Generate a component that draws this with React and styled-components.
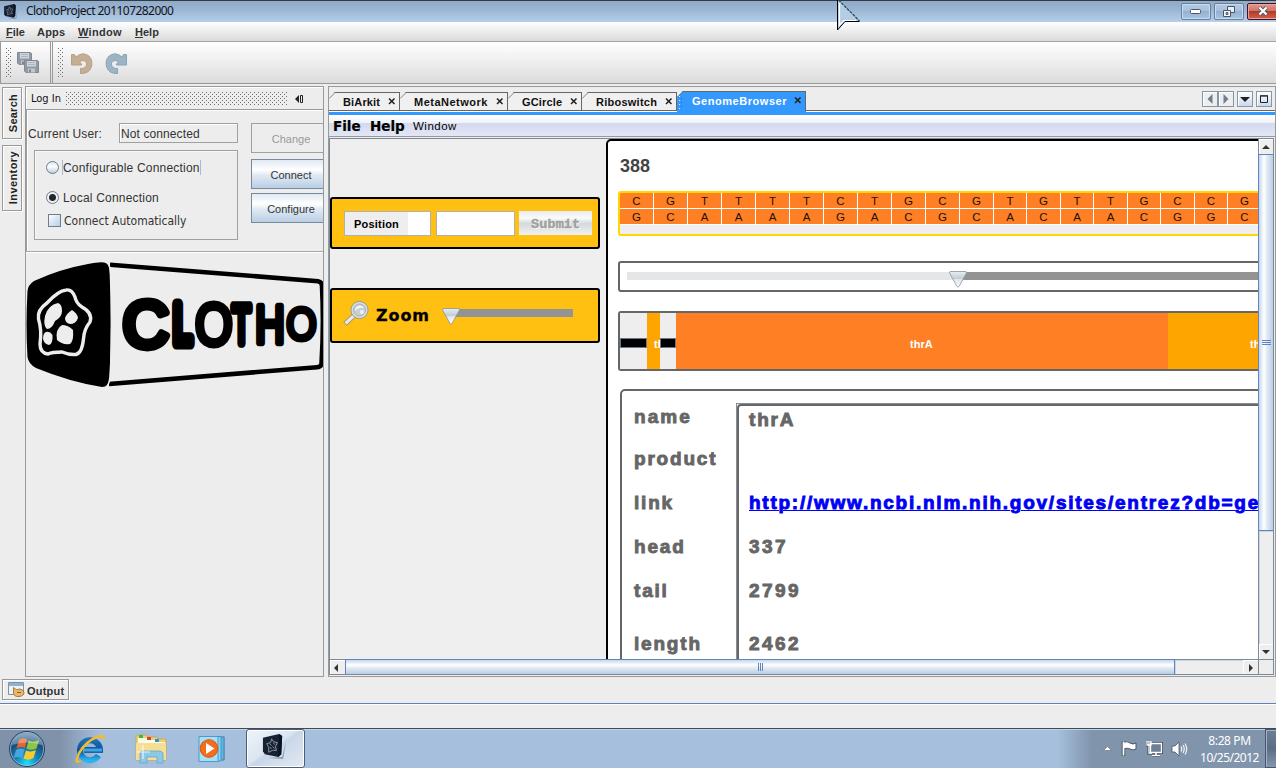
import React from 'react';
import styled, { createGlobalStyle, css } from 'styled-components';

const Global = createGlobalStyle`
  *, *::before, *::after { box-sizing: border-box; }
  body { margin: 0; background: #ededed; overflow: hidden; }
  svg { display: block; flex: none; }
`;

const ARIAL = '"Liberation Sans", Arial, sans-serif';
const TAHOMA = '"DejaVu Sans Condensed", "DejaVu Sans", sans-serif';
const SEGOE = '"Noto Sans", "Open Sans", sans-serif';

const Text = styled.span`
  display: block;
  flex: none;
  font-family: ${(p) => p.$font || ARIAL};
  font-size: ${(p) => p.$size || 11}px;
  font-weight: ${(p) => (p.$bold ? 700 : 400)};
  letter-spacing: ${(p) => p.$track || 0}px;
  color: ${(p) => p.$color || '#333'};
  line-height: 14px;
  white-space: pre;
`;

const Screen = styled.div`
  position: relative;
  width: 1276px;
  height: 768px;
  overflow: hidden;
  display: flex;
  flex-direction: column;
  background: #ededed;
`;

/* ---------- window frame ---------- */
const TitleBar = styled.header`
  height: 22px;
  flex: none;
  display: flex;
  align-items: center;
  padding-left: 3px;
  border-top: 1px solid #35383d;
  background: linear-gradient(#8fabca, #9cb6d4 45%, #b7cfe8);
`;
const TitleText = styled(Text)`
  margin-left: 8px;
  flex: 1;
  line-height: 18px;
  padding-bottom: 2px;
`;
const FrameButtons = styled.div`
  display: flex;
  gap: 3px;
  height: 17px;
  margin-top: -1px;
`;
const FrameButton = styled.div`
  width: ${(p) => (p.$close ? 32 : 30)}px;
  margin-right: ${(p) => (p.$close ? -3 : 0)}px;
  height: 17px;
  border: 1px solid ${(p) => (p.$close ? '#4a1020' : '#64809f')};
  border-radius: 2px;
  box-shadow: inset 0 0 0 1px ${(p) => (p.$close ? '#e4a59c' : '#c9dbee')};
  display: flex;
  align-items: center;
  justify-content: center;
  background: ${(p) => (p.$close
    ? 'linear-gradient(#dd9a8e, #cf7567 45%, #b53a25 50%, #cc6450)'
    : 'linear-gradient(#b5cae2, #a7c0dc 45%, #93b0d0 50%, #a9c4e0)')};
`;
const MenuBar = styled.nav`
  height: 20px;
  flex: none;
  display: flex;
  padding: 3px 0 0 6px;
  border-bottom: 1px solid #a3a3a3;
  background: linear-gradient(#fff, #dadada);
`;
const MenuItem = styled(Text)`
  width: ${(p) => p.$w}px;
  &::first-letter { text-decoration: ${(p) => (p.$plain ? 'none' : 'underline')}; }
`;
const ToolBar = styled.div`
  height: 42px;
  flex: none;
  display: flex;
  border-bottom: 1px solid #999;
  background: linear-gradient(#fff, #dcdcdc);
`;
const ToolGroup = styled.div`
  display: flex;
  align-items: center;
  padding: 1px 0 0 5px;
  width: ${(p) => p.$w}px;
  border-left: 1px solid #999;
  border-right: ${(p) => (p.$last ? 'none' : '1px solid #999')};
  margin-right: 1px;
`;
const ToolButton = styled.div`margin-left: ${(p) => p.$gap}px;`;
const dots = css`
  background-image:
    radial-gradient(circle at 0.5px 0.5px, #6c6c6c 0.6px, transparent 0.8px),
    radial-gradient(circle at 2.5px 2.5px, #6c6c6c 0.6px, transparent 0.8px);
  background-size: 4px 4px;
`;
const Grip = styled.div`
  width: 6px;
  height: 30px;
  ${dots}
`;

/* ---------- workspace ---------- */
const Workspace = styled.main`
  height: 593px;
  flex: none;
  display: flex;
  padding-top: 2px;
`;
const Rail = styled.div`
  width: 25px;
  padding: 1px 0 0 2px;
  display: flex;
  flex-direction: column;
  gap: 6px;
`;
const RailTab = styled.div`
  width: 20px;
  height: ${(p) => p.$h}px;
  padding-left: 2px;
  border: 1px solid #9a9a9a;
  box-shadow: inset 1px 1px #fff, 1px 1px #fff;
  display: flex;
  align-items: center;
  justify-content: center;
`;
const RailText = styled(Text)`
  writing-mode: vertical-rl;
  transform: rotate(180deg);
`;
const Login = styled.section`
  width: 299px;
  height: 591px;
  border: 1px solid #9a9a9a;
  display: flex;
  flex-direction: column;
  overflow: hidden;
`;
const LoginHead = styled.div`
  height: 23px;
  flex: none;
  padding: 2px 0 0 5px;
  display: flex;
  align-items: center;
  border-bottom: 1px solid #9a9a9a;
  box-shadow: inset 1px 1px #fff;
`;
const DotStrip = styled.div`
  width: 221px;
  height: 14px;
  margin: 0 8px 0 5px;
  ${dots}
`;
const LoginForm = styled.div`
  height: 142px;
  flex: none;
  display: flex;
  border-left: 1px solid #9a9a9a;
  border-bottom: 1px solid #a8a8a8;
  box-shadow: inset 1px 1px #fff, 0 1px #fff;
`;
const FormMain = styled.div`
  width: 224px;
  padding: 13px 0 0 1px;
  flex: none;
`;
const UserRow = styled.div`
  display: flex;
  align-items: center;
  height: 20px;
`;
const UserLabel = styled(Text)`padding-top: 2px;`;
const UserBox = styled.div`
  width: 119px;
  height: 20px;
  margin-left: auto;
  margin-right: 13px;
  padding: 3px 0 0 1px;
  border: 1px solid #a0a0a0;
  box-shadow: inset 1px 1px #fff;
`;
const Options = styled.div`
  width: 204px;
  height: 90px;
  margin: 7px 0 0 6px;
  padding: 8px 0 0 11px;
  border: 1px solid #a0a0a0;
  box-shadow: inset 1px 1px #f8f8f8;
`;
const Option = styled.div`
  display: flex;
  height: 16px;
  gap: ${(p) => p.$gap || 3}px;
  padding-top: 1px;
  padding-left: ${(p) => p.$pad || 0}px;
  margin-bottom: ${(p) => p.$below || 0}px;
`;
const OptionText = styled(Text)`padding-top: 1px;`;
const FocusText = styled(OptionText)`
  border-left: 1px solid #a5bcd6;
  border-right: 1px solid #a5bcd6;
`;
const Radio = styled.i`
  width: 13px;
  height: 13px;
  margin-top: 1px;
  border: 1px solid #6c7d90;
  border-radius: 50%;
  background: ${(p) => (p.$on
    ? 'radial-gradient(circle, #262626 3px, #eaf1f8 4px)'
    : 'linear-gradient(#d7e3ef, #fff 40%, #b8cfe5)')};
`;
const Check = styled.i`
  width: 13px;
  height: 13px;
  margin-top: 1px;
  border: 1px solid #6c7d90;
  background: linear-gradient(135deg, #fff, #e0eaf4 40%, #b8cfe5);
`;
const FormButtons = styled.div`
  padding-top: 13px;
  flex: none;
`;
const FormButton = styled.div`
  width: 80px;
  height: 30px;
  padding-top: 2px;
  margin-bottom: ${(p) => p.$below}px;
  display: flex;
  align-items: center;
  justify-content: center;
  border: 1px solid ${(p) => (p.$off ? '#a0a0a0' : '#7a8a99')};
  background: ${(p) => (p.$off ? '#ededed' : 'linear-gradient(#e0e9f4, #fff 35%, #dfe9f3 55%, #b9cfe5)')};
`;
const LogoHolder = styled.div`padding-top: 9px;`;

/* ---------- editor ---------- */
const Editor = styled.section`
  width: 948px;
  height: 591px;
  margin-left: 4px;
  border: 1px solid #999;
  display: flex;
  flex-direction: column;
`;
const TabStrip = styled.div`
  height: 25px;
  flex: none;
  display: flex;
  align-items: flex-end;
  border-bottom: 1px solid #fff;
  box-shadow: inset 0 -1px #666;
`;
const Tab = styled.div`
  position: relative;
  width: ${(p) => p.$w}px;
  height: ${(p) => (p.$active ? 21 : 19)}px;
  margin-bottom: ${(p) => (p.$active ? -1 : 0)}px;
  padding: 0 3px ${(p) => (p.$active ? 2 : 0)}px ${(p) => (p.$active ? 15 : 14)}px;
  display: flex;
  align-items: center;
  justify-content: space-between;
  background: ${(p) => (p.$active ? '#3399ff' : '#f0f0f0')};
  border: 1px solid #666;
  border-left: none;
  border-bottom-color: ${(p) => (p.$active ? '#3399ff' : '#666')};
  clip-path: polygon(0 6px, 6px 0, 100% 0, 100% 100%, 0 100%);
`;
const TabEdge = styled.svg`
  position: absolute;
  left: 0;
  top: -1px;
`;
const TabDots = styled.svg`
  position: absolute;
  left: 1px;
  top: 4px;
`;
const TabTools = styled.div`
  display: flex;
  margin: 0 3px 4px auto;
`;
const TabTool = styled.div`
  width: 16px;
  height: 16px;
  margin-left: ${(p) => p.$gap || 0}px;
  border: 1px solid #8696a8;
  box-shadow: inset 1px 1px #fff;
  background: ${(p) => (p.$lit ? 'linear-gradient(#fff, #c8d9ea)' : '#eee')};
  display: flex;
  align-items: center;
  justify-content: center;
`;
const BlueLine = styled.div`height: 3px; flex: none; background: #3399ff;`;
const InnerMenu = styled.div`
  height: 22px;
  flex: none;
  display: flex;
  align-items: center;
  padding-left: 4px;
  background: linear-gradient(#fff, #eef1f7 8px, #d3daee 8px, #e2e6f7);
  border-bottom: 1px solid #999;
  margin-bottom: 1px;
`;
const HeavyItem = styled(MenuItem)`-webkit-text-stroke: 0.2px #000;`;
const ScrollPane = styled.div`
  height: 537px;
  width: 945px;
  border: 1px solid #7a8a99;
  display: grid;
  grid-template: 520px 15px / 928px 15px;
`;
const Viewport = styled.div`
  display: flex;
  overflow: hidden;
  background: #efefef;
`;
const Controls = styled.div`
  width: 276px;
  flex: none;
  padding-top: 58px;
`;
const YellowBox = styled.div`
  width: 270px;
  height: ${(p) => p.$h}px;
  margin-bottom: 39px;
  padding: ${(p) => p.$pad};
  display: flex;
  border: 2px solid #000;
  border-radius: 3px;
  background: #ffc012;
`;
const Field = styled.div`
  width: ${(p) => p.$w}px;
  height: 25px;
  margin-right: ${(p) => p.$gap}px;
  border: 1px solid #b0b0b0;
  background: #fff;
`;
const FieldLabel = styled.div`
  width: 63px;
  height: 23px;
  padding: 5px 0 0 9px;
  background: #eee;
`;
const Submit = styled.div`
  width: 73px;
  height: 24px;
  padding: 7px 0 0 12px;
  background: linear-gradient(#e9ecee, #fafafa 30%, #d5dadd 52%, #f1f1f1);
`;
const SubmitText = styled(Text)`
  text-shadow: 1px 1px #fff;
  -webkit-text-stroke: 0.4px #a0a0a0;
`;
const ZoomText = styled(Text)`
  margin: 8px 0 0 6px;
  line-height: 16px;
  -webkit-text-stroke: 0.3px #000;
`;
const SliderBar = styled.div`
  display: flex;
  margin: ${(p) => p.$m};
`;
const Track = styled.div`
  width: ${(p) => p.$w}px;
  height: 8px;
  flex: none;
  background: ${(p) => (p.$filled ? '#e5e6e7' : '#939393')};
`;
const ThumbSvg = styled.svg`
  margin: -1px -9px 0;
  position: relative;
`;

const Stage = styled.div`
  width: 700px;
  height: 600px;
  flex: none;
  padding: 15px 0 0 10px;
  border: 2px solid #000;
  border-radius: 5px;
  background: #fff;
`;
const Position = styled(Text)`
  line-height: 20px;
  padding-left: 2px;
  height: 35px;
`;
const Framed = styled.div`
  width: 680px;
  height: ${(p) => p.$h}px;
  margin: 0 0 ${(p) => p.$below}px ${(p) => p.$left || 0}px;
  border: 2px solid ${(p) => p.$line || '#666'};
  border-radius: ${(p) => p.$r || 3}px;
  background: ${(p) => p.$bg || '#fff'};
  overflow: hidden;
`;
const BaseRow = styled.div`display: flex; height: 16px;`;
const Base = styled.div`
  width: ${(p) => p.$w}px;
  height: 16px;
  flex: none;
  padding-top: 1px;
  text-align: center;
  background: #ff7f24;
  border-right: 1px solid #fff;
  border-bottom: 1px solid #fff;
  font: 11.5px/15px ${ARIAL};
  color: #1a1208;
`;
const GeneRow = styled.div`display: flex; height: 56px;`;
const Gene = styled.div`
  width: ${(p) => p.$w}px;
  flex: none;
  padding: 24px 0 0 ${(p) => p.$pad}px;
  overflow: hidden;
  background: ${(p) => p.$bg};
`;
const Gap = styled.div`
  width: ${(p) => p.$w}px;
  flex: none;
  padding-top: 25px;
  background: #eee;
  &::before {
    content: '';
    display: block;
    height: 10px;
    background: #000;
    border: 1px solid #68788a;
  }
`;
const Details = styled.div`display: flex;`;
const Names = styled.div`width: 114px; flex: none; padding: 14px 0 0 12px;`;
const Values = styled.div`
  width: 600px;
  height: 400px;
  flex: none;
  margin-top: 12px;
  border: 1px solid #8a8f96;
`;
const ValuesInner = styled.div`
  height: 398px;
  padding: 2px 0 0 10px;
  border: 2px solid #666;
  border-radius: 4px;
`;
const Detail = styled(Text)`
  font-size: 19px;
  font-weight: 700;
  letter-spacing: ${(p) => p.$track || 1.8}px;
  line-height: 23px;
  height: ${(p) => p.$h}px;
  color: ${(p) => (p.$link ? '#0000f5' : '#666')};
  text-decoration: ${(p) => (p.$link ? 'underline' : 'none')};
  text-decoration-thickness: 1px;
  -webkit-text-stroke: 0.9px currentColor;
`;

const VBar = styled.div`
  display: flex;
  flex-direction: column;
  border-left: 1px solid #7a8a99;
`;
const HBar = styled.div`
  display: flex;
  border-top: 1px solid #7a8a99;
`;
const Arrow = styled.div`
  flex: none;
  width: ${(p) => p.$w}px;
  height: ${(p) => p.$h}px;
  padding: 1px ${(p) => p.$shift || 0}px 0 0;
  display: flex;
  align-items: center;
  justify-content: center;
  background: #eee;
  box-shadow: inset 1px 1px #fff;
`;
const VThumb = styled.div`
  height: 377px;
  flex: none;
  margin-left: -1px;
  padding-left: 2px;
  display: flex;
  align-items: center;
  justify-content: center;
  border: 1px solid #6382bf;
  border-right: none;
  background: linear-gradient(90deg, #c4d7ea, #fff 35%, #dfe8f2 60%, #b8cfe5);
`;
const HThumb = styled.div`
  width: 830px;
  height: 15px;
  margin-top: -1px;
  padding: 1px 0 0 2px;
  flex: none;
  display: flex;
  align-items: center;
  justify-content: center;
  border: 1px solid #6382bf;
  border-bottom: none;
  background: linear-gradient(#c4d7ea, #fff 35%, #dfe8f2 60%, #b8cfe5);
`;
const Filler = styled.div`
  flex: 1;
  background: #eee;
  box-shadow: inset 1px 1px #c8d6e5;
`;
const Corner = styled.div`border-left: 1px solid #7a8a99; border-top: 1px solid #7a8a99;`;

/* ---------- bottom bars ---------- */
const OutputRow = styled.div`
  height: 27px;
  flex: none;
  padding: 2px 0 0 2px;
  border-bottom: 1px solid #5f82ba;
`;
const OutputTab = styled.div`
  width: 67px;
  height: 21px;
  padding: 1px 0 0 5px;
  display: flex;
  align-items: center;
  gap: 2px;
  border: 1px solid #999;
  box-shadow: inset 1px 1px #fff, 1px 1px #fff;
`;
const OutputText = styled(Text)`padding-top: 1px;`;
const Status = styled.div`height: 24px; flex: none; border-top: 1px solid #fff;`;
const TaskBar = styled.footer`
  height: 40px;
  flex: none;
  display: flex;
  align-items: center;
  border-top: 1px solid #3f4b5a;
  box-shadow: inset 0 1px #c3d5e8;
  background: linear-gradient(90deg, #8092aa 0, #8092aa 60px, #a5bfdc 100px, #a5bfdc 1058px, #8094ac 1092px, #8094ac);
`;
const TaskIcon = styled.div`
  width: ${(p) => p.$w}px;
  height: 39px;
  flex: none;
  display: flex;
  align-items: center;
  justify-content: center;
`;
const TaskActive = styled(TaskIcon)`
  padding: 0 4px 4px 0;
  border: 1px solid #4f5f73;
  border-radius: 3px;
  box-shadow: inset 0 0 0 1px #fff;
  background: linear-gradient(145deg, #eef3f9, #dbe5f1 45%, #c8d7e8 50%, #e3eaf3);
`;
const Tray = styled.div`
  margin-left: auto;
  display: flex;
  align-items: center;
  gap: 8px;
`;
const Clock = styled.div`
  width: 66px;
  display: flex;
  flex-direction: column;
  align-items: center;
  gap: 3px;
  margin-left: 2px;
  padding: 2px 5px 0 0;
`;
const ShowDesktop = styled.div`
  width: 11px;
  height: 39px;
  margin-left: -8px;
  border: 1px solid #46566b;
  border-right: none;
  box-shadow: inset 1px 1px #a2b1c4;
  background: linear-gradient(#6d7f96, #5b6d84 50%, #8496ad);
`;
const Pointer = styled.svg`
  position: absolute;
  left: 835px;
  top: 0;
`;

/* ---------- drawings ---------- */
const CubeIcon = ({ size }) => (
  <svg width={size} height={size} viewBox="0 0 24 26">
    <path d="M6 25L22 26L25 8L21 24Z" fill="#6f8299" opacity=".7" />
    <path d="M1 4Q8 2 18 0L21 2L20 21L17 24L3 21L1 18Z" fill="#162134" />
    <path d="M18 0L21 2L20 21L17 24Z" fill="#0a1220" />
    <path d="M10 5l2 3 4 1-2 4 1 4-4 0-4 2 0-5-2-4 4-1zM8 10l2 2M12 9l1 2M8 14l2 1M11 13l2 2" fill="none" stroke="#9298a0" strokeWidth="1" />
  </svg>
);

const SaveAll = () => (
  <svg width="23" height="22" viewBox="0 0 23 22">
    {[[0, 0], [7, 8]].map(([x, y]) => (
      <g key={x} transform={`translate(${x} ${y})`}>
        <path d="M.5 .5H13.500L14.500 1.500V12.500H2L.5 11Z" fill="#919ba5" stroke="#7f8993" />
        <rect x="3" y="1" width="9" height="5.500" fill="#d3d6d9" />
        <path d="M4 2.500h7M4 4.500h7" stroke="#aeb4ba" />
        <rect x="4" y="8.500" width="7" height="4" fill="#c3c8cd" />
        <rect x="5" y="9.500" width="2" height="3" fill="#7d8791" />
      </g>
    ))}
  </svg>
);

const Undo = ({ flip }) => (
  <svg width="22" height="21" viewBox="0 0 22 21">
    <g transform={flip ? 'translate(22 0) scale(-1 1)' : undefined}>
      <path
        d="M.5 1.500H3.500L5 4Q8 1 12 .8Q19.500 1.500 20.800 8.500Q21.500 15 17 18.800Q14 20.800 9.500 20.500V15.500H12Q15.500 14.500 15.800 11Q15.500 7.500 12 7.500Q10 7.500 8.500 9L10.500 11V12H.5Z"
        fill={flip ? '#9db4c4' : '#c4ae94'}
        stroke={flip ? '#8ba3b5' : '#b5a088'}
      />
    </g>
  </svg>
);

const Triangle = ({ dir, color = '#333', size = 8 }) => {
  const d = { up: 'M0 6L4 2L8 6Z', down: 'M0 2H8L4 6Z', left: 'M6 0V8L2 4Z', right: 'M2 0V8L6 4Z' }[dir];
  return <svg width={size} height={size} viewBox="0 0 8 8"><path d={d} fill={color} /></svg>;
};

const Cross = () => (
  <svg width="8" height="7" viewBox="0 0 8 7">
    <path d="M1 0.500L6.500 6M6.500 .5L1 6" stroke="#222" strokeWidth="1.500" />
  </svg>
);

const Magnifier = () => (
  <svg width="27" height="27" viewBox="0 0 27 27">
    <path d="M2 24L11 15.500" stroke="#9c8f68" strokeWidth="5" />
    <path d="M2.500 23.500L11 15.500" stroke="#e6e8ea" strokeWidth="3.200" />
    <circle cx="16.500" cy="10" r="8.600" fill="#d8dde0" stroke="#9d9b84" />
    <circle cx="16.500" cy="10" r="6" fill="#c7d0d5" stroke="#a9b2b8" />
    <path d="M12 11Q12 6 17 5.500Q20 6 21 8Q15 7 12 11Z" fill="#f4f7f8" />
    <circle cx="19" cy="12" r="2" fill="#edf1f2" />
  </svg>
);

const Thumb = () => (
  <ThumbSvg width="18" height="17" viewBox="0 0 18 17">
    <defs>
      <linearGradient id="thumb" x1="0" y1="0" x2="0" y2="1">
        <stop offset="0" stopColor="#e8eef0" />
        <stop offset=".45" stopColor="#c2ced4" />
        <stop offset=".5" stopColor="#dfe6e9" />
        <stop offset="1" stopColor="#fff" />
      </linearGradient>
    </defs>
    <path d="M1 .5H17L17.500 2L10 15.500Q9 16.800 8 15.500L.5 2Z" fill="url(#thumb)" stroke="#87949b" strokeWidth=".8" />
  </ThumbSvg>
);

const LOGO_LETTERS = [
  { ch: 'C', x: 122, y: 297.5, w: 48, h: 54, gx: 0.05, gw: 0.632, gd: 0.012, gh: 0.71, fs: 62, s: 7.500 },
  { ch: 'L', x: 172, y: 299, w: 23, h: 51, gx: 0.08, gw: 0.447, gd: 0, gh: 0.688, fs: 50, s: 12 },
  { ch: 'O', x: 195, y: 300.5, w: 38, h: 48, gx: 0.048, gw: 0.685, gd: 0.012, gh: 0.71, fs: 56, s: 5.500 },
  { ch: 'T', x: 230, y: 302, w: 23, h: 46, gx: 0.02, gw: 0.57, gd: 0, gh: 0.688, fs: 46, s: 8 },
  { ch: 'H', x: 256, y: 303, w: 28, h: 43, gx: 0.08, gw: 0.563, gd: 0, gh: 0.688, fs: 48, s: 6 },
  { ch: 'O', x: 286, y: 305.500, w: 31, h: 38, gx: 0.048, gw: 0.685, gd: 0.012, gh: 0.71, fs: 44, s: 4.800 },
];

const ClothoLogo = () => (
  <svg width="297" height="128" viewBox="26 261 297 128">
    <path d="M27.500 291Q28 285 34 281Q60 269 88 264Q100 261.500 104 262.500Q109 263 109.500 270Q112 325 109.500 378Q109 387 102 387Q70 382 36 368Q28.500 364 27.500 357Q25.500 325 27.500 291Z" fill="#000" />
    <path d="M110 264.800L318 281.200Q322 282 322 286Q324 325 321.500 364Q321 367 317 367.200L109 384" fill="none" stroke="#000" strokeWidth="4.600" />
    <path d="M107 261.500Q111 266 111 280Q112.500 325 110.500 372Q110 384 106 387.500" fill="none" stroke="#ededed" strokeWidth="1.600" />
    <path
      d="M66 290Q72 289 75 297Q76 303 82 307Q93 313 90 322Q84 329 83.500 339Q82 353 76 354.500Q69 355 62 352Q52 352 48 354Q40 353 40 344Q42 330 38.500 319Q37 310 47 303Q58 291 66 290Z"
      fill="#000"
      stroke="#ededed"
      strokeWidth="3.400"
    />
    <path d="M58 303Q62 304 62 311Q62 317 55 321Q52 329 47 329Q43 326 45 316Q48 305 58 303Z" fill="#ededed" />
    <path d="M72 310Q77 313 78 318Q76 324 70 324Q65 323 65 318Q67 313 72 310Z" fill="#ededed" />
    <path d="M62 325Q68 325 73 330Q74 341 70 344Q62 345 57 340Q55 329 62 325Z" fill="#ededed" />
    <path d="M46 332Q50 331 52.500 335Q53 344 49 345Q44 344 43 339Q43 333 46 332Z" fill="#ededed" />
    {LOGO_LETTERS.map((l, i) => {
      const sx = l.w / (l.gw * l.fs + l.s);
      const sy = l.h / (l.gh * l.fs + l.s);
      return (
        <text
          key={i}
          transform={`translate(${l.x + (l.s / 2 - l.gx * l.fs) * sx} ${l.y + l.h - (l.s / 2 + l.gd * l.fs) * sy}) scale(${sx} ${sy})`}
          fontFamily="Liberation Sans, Arial, sans-serif"
          fontSize={l.fs}
          stroke="#000"
          strokeWidth={l.s}
          strokeLinejoin="round"
        >
          {l.ch}
        </text>
      );
    })}
  </svg>
);

const StartOrb = () => (
  <svg width="38" height="38" viewBox="0 0 38 38">
    <defs>
      <radialGradient id="orb" cx=".5" cy=".9" r=".9">
        <stop offset="0" stopColor="#1ce0ff" />
        <stop offset=".35" stopColor="#1685ba" />
        <stop offset=".7" stopColor="#1b4c79" />
        <stop offset="1" stopColor="#6b96b6" />
      </radialGradient>
    </defs>
    <circle cx="19" cy="19" r="17.500" fill="url(#orb)" stroke="#27425f" />
    <circle cx="19" cy="19" r="16.500" fill="none" stroke="#a9c9dd" opacity=".7" />
    <path d="M11 10Q15 7 19 9.500L17 18Q13 16 8.500 18.500Z" fill="#e8642b" />
    <path d="M20.500 10.500Q25 13 31 10L28.500 18.500Q23 21 18.500 18.500Z" fill="#8dc63f" />
    <path d="M8 20Q12.500 17.500 16.500 19.500L14 28Q10 26 5.500 28Z" fill="#49a5dd" />
    <path d="M18 20.500Q23 22.500 28 20L25.500 28Q20.500 31 15.500 28.500Z" fill="#fbc928" />
    <path d="M4 15Q6 4 19 3Q32 4 34 15Q19 10 4 15Z" fill="#fff" opacity=".3" />
  </svg>
);

const Explorer = () => (
  <svg width="34" height="32" viewBox="0 0 34 32">
    <defs>
      <linearGradient id="ie" x1="0" y1="0" x2="0" y2="1">
        <stop offset="0" stopColor="#1c6fb8" />
        <stop offset=".5" stopColor="#0f4f9e" />
        <stop offset="1" stopColor="#29b5ef" />
      </linearGradient>
    </defs>
    <path d="M25.500 22A10 10 0 1 1 27 16.500H11" fill="none" stroke="url(#ie)" strokeWidth="6" transform="translate(0 .5)" />
    <path d="M11 17H29" stroke="#3ea5df" strokeWidth="3" />
    <path d="M7 29Q1 32 3 25Q7 12 19 5Q30 -1 32 4Q32 6 31 9Q31 3 25 5Q14 9 7 21Q2 30 9 27Z" fill="#f4bd25" />
  </svg>
);

const Folder = () => (
  <svg width="34" height="32" viewBox="0 0 34 32">
    <path d="M2 4Q2 2 4 2H12L14 4H23L24 6H31Q32 6 32 8V27H2Z" fill="#eecf72" stroke="#c9a545" strokeWidth=".8" />
    <path d="M4 5H14L15 7H22V9H31V12H4Z" fill="#fffbe8" />
    <rect x="5" y="2" width="4" height="3" fill="#2fbf3a" />
    <rect x="13" y="4" width="4" height="3" fill="#d8432c" />
    <rect x="21" y="6" width="4" height="3" fill="#2c93de" />
    <path d="M2 10H32V27H2Z" fill="#f5df95" />
    <path d="M6 30V20Q6 18 9 18H25Q28 18 29 20V30H23V24H13V30Z" fill="#8cc9e8" stroke="#62a5cb" strokeWidth=".8" />
    <path d="M9 12V26M3 19H16" stroke="#fff" strokeWidth="1.200" opacity=".8" />
  </svg>
);

const MediaPlayer = () => (
  <svg width="28" height="28" viewBox="0 0 28 28">
    <path d="M10 4L27 1V24L28 25L20 26Z" fill="#6e8aa8" opacity=".4" />
    <path d="M6 2H26V25H6Z" fill="#66b5de" stroke="#3b86b8" />
    <path d="M3 1.500H23V26H3Z" fill="#8fd0ee" stroke="#4397c6" />
    <path d="M1 1.500H20V26.500H1Z" fill="#a9def4" stroke="#4a9cc9" />
    <circle cx="11" cy="13.500" r="8.800" fill="#f26d1f" stroke="#d85408" />
    <path d="M8 8L16.500 13.500L8 19Z" fill="#fff" />
  </svg>
);

const OutputIcon = () => (
  <svg width="17" height="16" viewBox="0 0 17 16">
    <path d="M.5 .5H15.500V12.500H.5Z" fill="#eef2f7" stroke="#7d93ad" />
    <path d="M1 1H15V4H1Z" fill="#8fb1d3" />
    <path d="M5.500 5.500Q8 9 12 7Q16 8 16 10.500Q16 14 11 14.500Q6 15 5.500 11Z" fill="#eab869" stroke="#a67c3c" />
    <path d="M9 10.500H13" stroke="#8d6127" />
  </svg>
);

const BASES = [
  ['C', 'G', 34], ['G', 'C', 34], ['T', 'A', 34], ['T', 'A', 34], ['T', 'A', 34], ['T', 'A', 34], ['C', 'G', 34],
  ['T', 'A', 34], ['G', 'C', 34], ['C', 'G', 34], ['G', 'C', 34], ['T', 'A', 33], ['G', 'C', 34], ['T', 'A', 33],
  ['T', 'A', 34], ['G', 'C', 33], ['C', 'G', 34], ['C', 'G', 33], ['G', 'C', 34],
];

const TABS = [
  { label: 'BiArkit', w: 71, track: 0.15 },
  { label: 'MetaNetwork', w: 108, track: 0.5 },
  { label: 'GCircle', w: 74, track: 0.15 },
  { label: 'Riboswitch', w: 95, track: 0.25 },
  { label: 'GenomeBrowser', w: 129, track: 0.54, active: true },
];

export default function App() {
  return (
    <Screen>
      <Global />
      <TitleBar>
        <CubeIcon size={15} />
        <TitleText $font={SEGOE} $size={12} $track={-0.55} $color="#101418">ClothoProject 201107282000</TitleText>
        <FrameButtons>
          <FrameButton>
            <svg width="12" height="5" viewBox="0 0 12 5"><rect x=".5" y=".5" width="10" height="4" rx="1" fill="#fff" stroke="#4b5666" /></svg>
          </FrameButton>
          <FrameButton>
            <svg width="12" height="11" viewBox="0 0 12 11">
              <path d="M4.500.5h7v6h-7z" fill="#e8edf3" stroke="#4b5666" />
              <path d="M.5 4.500h7v6h-7z" fill="#f4f6f9" stroke="#4b5666" />
              <path d="M3 6.500h2v2h-2z" fill="#7e9cbb" stroke="#4b5666" strokeWidth=".8" />
            </svg>
          </FrameButton>
          <FrameButton $close>
            <svg width="12" height="10" viewBox="0 0 12 10">
              <path d="M2.500 1.500L9.500 8.500M9.500 1.500L2.500 8.500" stroke="#545c6b" strokeWidth="4" />
              <path d="M2.500 1.500L9.500 8.500M9.500 1.500L2.500 8.500" stroke="#fff" strokeWidth="2.200" />
            </svg>
          </FrameButton>
        </FrameButtons>
      </TitleBar>
      <MenuBar>
        <MenuItem $bold $w={31}>File</MenuItem>
        <MenuItem $bold $w={41} $track={0.2} $plain>Apps</MenuItem>
        <MenuItem $bold $w={57} $track={0.3}>Window</MenuItem>
        <MenuItem $bold $w={40}>Help</MenuItem>
      </MenuBar>
      <ToolBar>
        <ToolGroup $w={51}>
          <Grip />
          <ToolButton $gap={5}><SaveAll /></ToolButton>
        </ToolGroup>
        <ToolGroup $w={300} $last>
          <Grip />
          <ToolButton $gap={7}><Undo /></ToolButton>
          <ToolButton $gap={12}><Undo flip /></ToolButton>
        </ToolGroup>
      </ToolBar>

      <Workspace>
        <Rail>
          <RailTab $h={52}><RailText $bold $track={0.25} $color="#222">Search</RailText></RailTab>
          <RailTab $h={66}><RailText $bold $track={0.4} $color="#222">Inventory</RailText></RailTab>
        </Rail>
        <Login>
          <LoginHead>
            <Text $font={TAHOMA} $color="#111">Log In</Text>
            <DotStrip />
            <svg width="8" height="8" viewBox="0 0 8 8"><path d="M4 0V8L0 4Z" fill="#222" /><path d="M5.500 .5h2v7h-2z" fill="none" stroke="#222" /></svg>
          </LoginHead>
          <LoginForm>
            <FormMain>
              <UserRow>
                <UserLabel $size={12} $track={0.15}>Current User:</UserLabel>
                <UserBox><Text $size={12} $track={0.1}>Not connected</Text></UserBox>
              </UserRow>
              <Options>
                <Option $below={14}><Radio /><FocusText $size={12} $track={0.2}>Configurable Connection</FocusText></Option>
                <Option $below={7} $gap={4}><Radio $on /><OptionText $size={12} $track={0.2}>Local Connection</OptionText></Option>
                <Option $pad={2}><Check /><OptionText $font={TAHOMA} $size={12}>Connect Automatically</OptionText></Option>
              </Options>
            </FormMain>
            <FormButtons>
              <FormButton $off $below={6}><Text $color="#999">Change</Text></FormButton>
              <FormButton $below={4}><Text>Connect</Text></FormButton>
              <FormButton $below={0}><Text>Configure</Text></FormButton>
            </FormButtons>
          </LoginForm>
          <LogoHolder><ClothoLogo /></LogoHolder>
        </Login>

        <Editor>
          <TabStrip>
            {TABS.map((t) => (
              <Tab key={t.label} $w={t.w} $active={t.active}>
                <TabEdge width="7" height="7" viewBox="0 0 7 7"><path d="M0 6.500L6.500 0" stroke="#666" /></TabEdge>
                {t.active && (
                  <TabDots width="4" height="14" viewBox="0 0 4 14">
                    <path d="M1.500 0v14" stroke="#d8ebff" strokeDasharray="1 3" />
                    <path d="M3.500 2v12" stroke="#1d5fa8" strokeDasharray="1 3" />
                  </TabDots>
                )}
                <Text $bold $track={t.track} $color={t.active ? '#fff' : '#111'}>{t.label}</Text>
                <Cross />
              </Tab>
            ))}
            <TabTools>
              <TabTool><Triangle dir="left" color="#6d7f93" size={10} /></TabTool>
              <TabTool><Triangle dir="right" color="#6d7f93" size={10} /></TabTool>
              <TabTool $gap={3} $lit><svg width="10" height="5" viewBox="0 0 10 5"><path d="M0 0H10L5 5Z" fill="#222" /></svg></TabTool>
              <TabTool $gap={3} $lit><svg width="8" height="8" viewBox="0 0 8 8"><path d="M.5 1h7v6.500h-7zM0 .8h8" fill="none" stroke="#222" /></svg></TabTool>
            </TabTools>
          </TabStrip>
          <BlueLine />
          <InnerMenu>
            <HeavyItem $plain $w={37} $font={'"DejaVu Sans", sans-serif'} $bold $size={13.5} $color="#000">File</HeavyItem>
            <HeavyItem $plain $w={43} $font={'"DejaVu Sans", sans-serif'} $bold $size={13.5} $color="#000">Help</HeavyItem>
            <Text $size={11.5} $track={0.5} $color="#000">Window</Text>
          </InnerMenu>
          <ScrollPane>
            <Viewport>
              <Controls>
                <YellowBox $h={52} $pad="12px 0 0 12px">
                  <Field $w={87} $gap={5}><FieldLabel><Text $bold $track={0.2} $color="#000">Position</Text></FieldLabel></Field>
                  <Field $w={79} $gap={4} />
                  <Submit><SubmitText $font={'"Liberation Mono", monospace'} $bold $size={13.7} $color="#a0a0a0">Submit</SubmitText></Submit>
                </YellowBox>
                <YellowBox $h={55} $pad="10px 0 0 11px">
                  <Magnifier />
                  <ZoomText $font={'"DejaVu Sans", sans-serif'} $bold $size={16} $track={0.9} $color="#000">Zoom</ZoomText>
                  <SliderBar $m="9px 0 0 21px"><Thumb /><Track $w={122} /></SliderBar>
                </YellowBox>
              </Controls>
              <Stage>
                <Position $bold $size={18} $color="#444">388</Position>
                <Framed $h={45} $below={25} $line="#ffd800" $bg="#efefef">
                  <BaseRow>{BASES.map((b, i) => <Base key={i} $w={b[2]}>{b[0]}</Base>)}</BaseRow>
                  <BaseRow>{BASES.map((b, i) => <Base key={i} $w={b[2]}>{b[1]}</Base>)}</BaseRow>
                </Framed>
                <Framed $h={31} $below={19}>
                  <SliderBar $m="9px 0 0 7px"><Track $w={331} $filled /><Thumb /><Track $w={330} /></SliderBar>
                </Framed>
                <Framed $h={60} $below={18}>
                  <GeneRow>
                    <Gap $w={27} />
                    <Gene $w={13} $pad={7} $bg="#ffa500"><Text $bold $color="#fff">thrL</Text></Gene>
                    <Gap $w={16} />
                    <Gene $w={492} $pad={234} $bg="#ff7f24"><Text $bold $color="#fff">thrA</Text></Gene>
                    <Gene $w={140} $pad={82} $bg="#ffa500"><Text $bold $color="#fff">thrB</Text></Gene>
                  </GeneRow>
                </Framed>
                <Framed $h={500} $below={0} $left={2} $r={5}>
                  <Details>
                    <Names>
                      <Detail $h={42} $track={2.1}>name</Detail>
                      <Detail $h={44}>product</Detail>
                      <Detail $h={44}>link</Detail>
                      <Detail $h={44}>head</Detail>
                      <Detail $h={53}>tail</Detail>
                      <Detail $h={44}>length</Detail>
                    </Names>
                    <Values>
                      <ValuesInner>
                        <Detail $h={83}>thrA</Detail>
                        <Detail $h={44} $track={1.75} $link>http://www.ncbi.nlm.nih.gov/sites/entrez?db=gene</Detail>
                        <Detail $h={44} $track={2.4}>337</Detail>
                        <Detail $h={53} $track={2.4}>2799</Detail>
                        <Detail $h={44} $track={2.4}>2462</Detail>
                      </ValuesInner>
                    </Values>
                  </Details>
                </Framed>
              </Stage>
            </Viewport>
            <VBar>
              <Arrow $w={14} $h={15}><Triangle dir="up" /></Arrow>
              <VThumb><svg width="10" height="6" viewBox="0 0 10 6"><path d="M0 .5h9M0 2.500h9M0 4.500h9" stroke="#6382bf" /></svg></VThumb>
              <Filler />
              <Arrow $w={14} $h={15}><Triangle dir="down" /></Arrow>
            </VBar>
            <HBar>
              <Arrow $w={15} $h={14} $shift={3}><Triangle dir="left" /></Arrow>
              <HThumb><svg width="6" height="9" viewBox="0 0 6 9"><path d="M.5 0v8M2.500 0v8M4.500 0v8" stroke="#6382bf" /></svg></HThumb>
              <Filler />
              <Arrow $w={15} $h={14}><Triangle dir="right" /></Arrow>
            </HBar>
            <Corner />
          </ScrollPane>
        </Editor>
      </Workspace>

      <OutputRow>
        <OutputTab><OutputIcon /><OutputText $bold $track={0.2}>Output</OutputText></OutputTab>
      </OutputRow>
      <Status />
      <TaskBar>
        <TaskIcon $w={54}><StartOrb /></TaskIcon>
        <TaskIcon $w={71}><Explorer /></TaskIcon>
        <TaskIcon $w={52}><Folder /></TaskIcon>
        <TaskIcon $w={69}><MediaPlayer /></TaskIcon>
        <TaskActive $w={59}><CubeIcon size={25} /></TaskActive>
        <Tray>
          <svg width="9" height="5" viewBox="0 0 9 5"><path d="M.5 4.500L4.500 .5L8.500 4.500Z" fill="#fff" stroke="#5d6b7d" strokeWidth=".6" /></svg>
          <svg width="18" height="18" viewBox="0 0 18 18">
            <path d="M3.500 1V16" stroke="#3c4959" strokeWidth="3.500" />
            <path d="M3.500 2.500Q7 .5 10 3Q13 5 16 3V9Q13 11 10 9Q7 7.500 3.500 9Z" fill="#fff" stroke="#46546a" />
            <path d="M3.500 1.500V15.500" stroke="#fff" strokeWidth="1.800" />
          </svg>
          <svg width="17" height="17" viewBox="0 0 17 17">
            <path d="M4.500 3.500H15.500V12.500H4.500Z" fill="#6d8097" stroke="#3c4959" strokeWidth="3" />
            <path d="M1 2V5H5V2M3 5V13H6M6 15.500H14" fill="none" stroke="#3c4959" strokeWidth="3" />
            <path d="M4.500 3.500H15.500V12.500H4.500Z" fill="#6d8097" stroke="#fff" strokeWidth="1.300" />
            <path d="M6 15.500H14M10 12.500V15" stroke="#fff" strokeWidth="1.500" />
            <path d="M1 1V5H5V1M3 1V13H6" fill="none" stroke="#fff" strokeWidth="1.300" />
          </svg>
          <svg width="18" height="16" viewBox="0 0 18 16">
            <path d="M1 5H4L8 1V15L4 11H1Z" fill="#fff" stroke="#46546a" strokeWidth=".8" />
            <path d="M10 5.500Q11.500 8 10 10.500M12 4Q14.500 8 12 12M14 2.500Q17.500 8 14 13.500" fill="none" stroke="#f2f5f8" strokeWidth="1.200" />
          </svg>
          <Clock>
            <Text $font={SEGOE} $size={12} $track={-0.4} $color="#fff">8:28 PM</Text>
            <Text $font={SEGOE} $size={12} $track={-0.5} $color="#fff">10/25/2012</Text>
          </Clock>
          <ShowDesktop />
        </Tray>
      </TaskBar>
      <Pointer width="26" height="32" viewBox="0 0 26 32">
        <path d="M2.500 0V30L10 21.500H24.500L3 0Z" fill="#b4cce5" stroke="none" />
        <path d="M4.500 3V25L9 20.500H21" fill="none" stroke="#fff" strokeWidth="1.200" />
        <path d="M2.500 0V30L10 21.500H24.500" fill="none" stroke="#000" />
        <path d="M3.500 0L24.500 21" fill="none" stroke="#1c4b4f" strokeWidth="1.200" strokeDasharray="3 1" />
      </Pointer>
    </Screen>
  );
}
